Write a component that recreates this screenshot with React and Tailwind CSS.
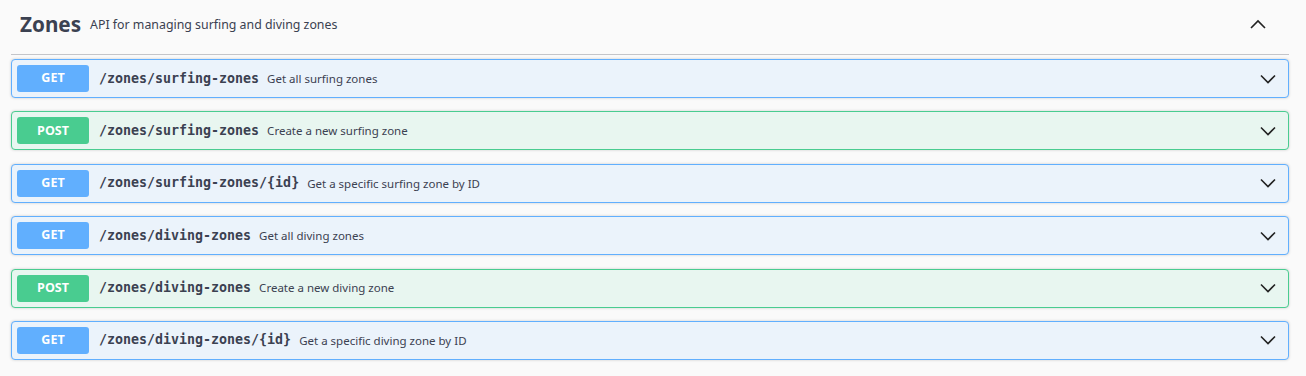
import React from "react";

const rows = [
  { m: "GET", p: "/zones/surfing-zones", d: "Get all surfing zones" },
  { m: "POST", p: "/zones/surfing-zones", d: "Create a new surfing zone" },
  { m: "GET", p: "/zones/surfing-zones/{id}", d: "Get a specific surfing zone by ID" },
  { m: "GET", p: "/zones/diving-zones", d: "Get all diving zones" },
  { m: "POST", p: "/zones/diving-zones", d: "Create a new diving zone" },
  { m: "GET", p: "/zones/diving-zones/{id}", d: "Get a specific diving zone by ID" },
];

function Chevron({ up }) {
  return (
    <svg width="16" height="10" viewBox="0 0 16 10" fill="none" stroke="#222" strokeWidth="1.6">
      {up ? <path d="M1 9 L8 2 L15 9" /> : <path d="M1 1.5 L8 8.5 L15 1.5" />}
    </svg>
  );
}

function Row({ m, p, d }) {
  const get = m === "GET";
  return (
    <div
      className={`flex items-center h-[39px] mb-[13.4px] border rounded-[4px] shadow-[0_0_3px_rgba(0,0,0,0.19)] pl-[5px] pr-[12px] ${
        get ? "bg-[#ebf3fb] border-[#61affe]" : "bg-[#e8f6f0] border-[#49cc90]"
      }`}
    >
      <div
        className={`w-[72px] h-[27px] rounded-[3px] flex items-center justify-center text-white font-bold text-[12.5px] ${
          get ? "bg-[#61affe]" : "bg-[#49cc90]"
        }`}
        style={{ fontFamily: "'Open Sans', 'Noto Sans', sans-serif" }}
      >
        {m}
      </div>
      <span
        className="ml-[10px] text-[#3b4151] font-bold text-[13.3px]"
        style={{ fontFamily: "'DejaVu Sans Mono', monospace" }}
      >
        {p}
      </span>
      <span
        className="ml-[8px] text-[#3b4151] text-[11.5px]"
        style={{ fontFamily: "'Noto Sans', sans-serif" }}
      >
        {d}
      </span>
      <div className="ml-auto flex items-center">
        <Chevron />
      </div>
    </div>
  );
}

export default function App() {
  return (
    <div className="w-[1306px] h-[376px] bg-[#fafafa] overflow-hidden">
      <div className="pl-[11px] w-[1289px]">
        <div className="h-[55px] flex items-center border-b border-[#c4c5c9] pr-[23px] pb-[4px]">
          <span
            className="ml-[9px] text-[20.7px] font-bold text-[#3b4151]"
            style={{ fontFamily: "'Noto Sans', sans-serif" }}
          >
            Zones
          </span>
          <span
            className="ml-[9px] text-[12.35px] text-[#3b4151] mt-[1px]"
            style={{ fontFamily: "'Noto Sans', sans-serif" }}
          >
            API for managing surfing and diving zones
          </span>
          <div className="ml-auto -mt-[3px]">
            <Chevron up />
          </div>
        </div>
        <div className="pt-[4px]">
          {rows.map((r, i) => (
            <Row key={i} {...r} />
          ))}
        </div>
      </div>
    </div>
  );
}
